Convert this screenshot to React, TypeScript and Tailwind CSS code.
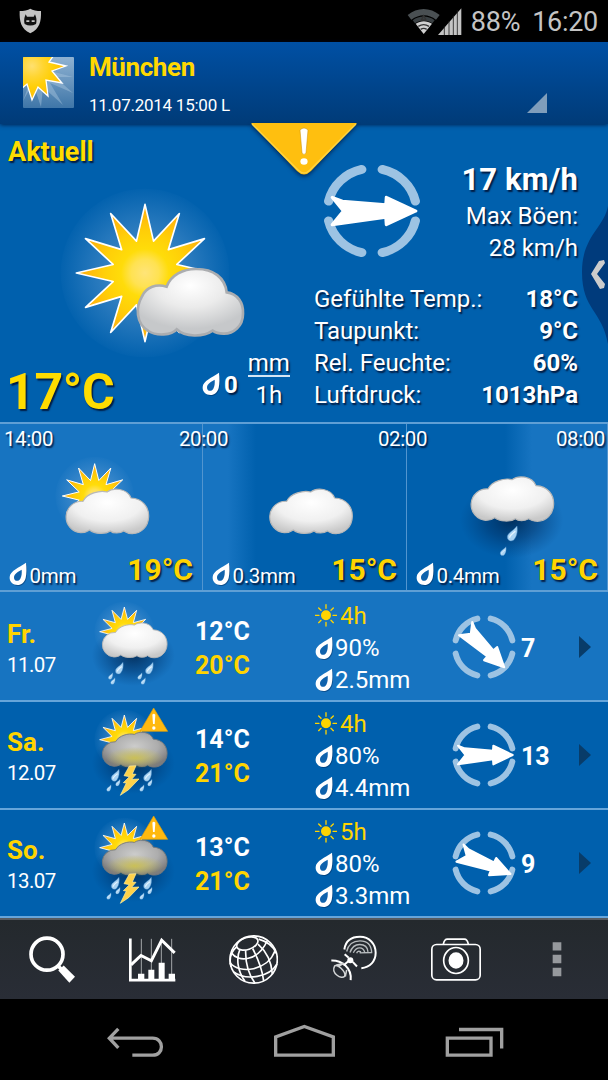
import type { ReactNode } from "react";

type Condition = "sunny" | "cloudy" | "shower" | "sunRain" | "storm";

interface Period {
  rain: string;
  temp: string;
  condition: Condition;
}

interface Day {
  name: string;
  date: string;
  condition: Condition;
  low: string;
  high: string;
  sun: string;
  humidity: string;
  rain: string;
  windAngle: number;
  wind: string;
}

const PERIODS: Period[] = [
  { rain: "0mm", temp: "19°C", condition: "sunny" },
  { rain: "0.3mm", temp: "15°C", condition: "cloudy" },
  { rain: "0.4mm", temp: "15°C", condition: "shower" },
];

const DAYS: Day[] = [
  { name: "Fr.", date: "11.07", condition: "sunRain", low: "12°C", high: "20°C", sun: "4h", humidity: "90%", rain: "2.5mm", windAngle: 45, wind: "7" },
  { name: "Sa.", date: "12.07", condition: "storm", low: "14°C", high: "21°C", sun: "4h", humidity: "80%", rain: "4.4mm", windAngle: 0, wind: "13" },
  { name: "So.", date: "13.07", condition: "storm", low: "13°C", high: "21°C", sun: "5h", humidity: "80%", rain: "3.3mm", windAngle: 22.5, wind: "9" },
];

const DETAILS = [
  { label: "Gefühlte Temp.:", value: "18°C" },
  { label: "Taupunkt:", value: "9°C" },
  { label: "Rel. Feuchte:", value: "60%" },
  { label: "Luftdruck:", value: "1013hPa" },
];

function starPoints(cx: number, cy: number, outer: number, inner: number) {
  return Array.from({ length: 24 }, (_, i) => {
    const r = i % 2 === 0 ? outer : inner;
    const a = (i * Math.PI) / 12;
    return `${(cx + r * Math.sin(a)).toFixed(1)},${(cy - r * Math.cos(a)).toFixed(1)}`;
  }).join(" ");
}

export default function App() {
  return (
    <main className="flex h-[1080px] w-[608px] flex-col overflow-hidden bg-black font-[Roboto,sans-serif] text-white">
      <Gradients />
      <StatusBar />
      <Header />
      <CurrentWeather />
      <PeriodStrip />
      {DAYS.map((day, i) => (
        <DayRow key={day.date} day={day} first={i === 0} />
      ))}
      <Toolbar />
      <NavBar />
    </main>
  );
}

function StatusBar() {
  return (
    <div className="flex h-[42px] shrink-0 items-center bg-black pr-[10px] pl-[19px] text-[#c4c4c4]">
      <svg width="23" height="26" viewBox="0 0 69 78">
        <path d="M34 2C27 7 14 9 2 9C1 40 6 63 34 76C62 63 67 40 66 9C54 9 41 7 34 2Z" fill="#c4c4c4" />
        <path d="M17 27L20 19L24 26H44L48 19L51 27C53 34 53 42 51 48C40 54 28 54 17 48C15 42 15 34 17 27Z" fill="#111" />
        <path d="M22 37H31V42H22ZM38 37H47V42H38Z" fill="#c4c4c4" />
      </svg>
      <svg className="ml-auto" width="56" height="28" viewBox="0 0 168 84">
        <path d="M2 24C30 0 70 0 98 24L87 38C65 20 37 20 13 38Z" fill="#4a5053" />
        <path d="M17 40C37 25 63 25 83 40L76 49C59 38 41 38 24 49Z" fill="#3a4043" />
        <path d="M26 50C41 40 60 40 75 50L50 81Z" fill="#d0d0d0" />
        <path d="M34 58Q50 48 66 58M41 67Q50 61 59 67M50 26L43 39H57Z" stroke="#333" strokeWidth="4" fill="none" />
        <path d="M93 84L163 4V84Z" fill="#c4c4c4" />
        <path d="M112 58V84M126 42V84M139 26V84M151 10V84" stroke="#222" strokeWidth="2.5" />
      </svg>
      <span className="ml-[8px] pt-[2px] text-[27px] leading-[40px] tracking-[-0.2px]">88%</span>
      <span className="ml-[12px] pt-[2px] text-[27px] leading-[40px] tracking-[-0.3px]">16:20</span>
    </div>
  );
}

function Header() {
  return (
    <header className="relative z-10 flex h-[82px] shrink-0 items-start bg-linear-to-b from-[#0050a4] to-[#003b78] pl-[23px] shadow-[0_1px_4px_rgba(0,20,60,0.8)]">
      <svg className="mt-[15px]" width="51" height="51" viewBox="0 0 51 51">
        <defs>
          <clipPath id="logoClip">
            <rect width="51" height="51" rx="1" />
          </clipPath>
          <linearGradient id="logoBg" x1="0" y1="0" x2="0" y2="1">
            <stop offset="0" stopColor="#8fb2d2" />
            <stop offset="1" stopColor="#3f76a8" />
          </linearGradient>
          <radialGradient id="logoSun" gradientUnits="userSpaceOnUse" cx="9" cy="9" r="38">
            <stop offset="0" stopColor="#ffe070" />
            <stop offset="0.3" stopColor="#ffd530" />
            <stop offset="0.55" stopColor="#ffcf08" />
            <stop offset="1" stopColor="#ffb50a" />
          </radialGradient>
        </defs>
        <g clipPath="url(#logoClip)">
          <rect width="51" height="51" fill="url(#logoBg)" />
          <path d="M12 10L50 20L32 20L50 36L27 26L40 48L20 30L18 50L10 26L0 44Z" fill="#a9c5de" opacity="0.45" />
          <path d="M-2 -2H31L26 5L43 9L29 14L39 26L23 23L25 39L15 30L9 43L4 27L-2 32Z" fill="url(#logoSun)" stroke="#fff" strokeWidth="1.3" />
        </g>
      </svg>
      <div className="ml-[15px] pt-[8px]">
        <h1 className="text-[26px] leading-[34px] font-bold tracking-[-0.4px] text-[#ffd800]">München</h1>
        <p className="mt-[11px] text-[17px] leading-[20px] tracking-[-0.25px]">11.07.2014 15:00 L</p>
      </div>
      <svg className="mt-[51px] mr-[61px] ml-auto" width="20" height="20" viewBox="0 0 20 20">
        <path d="M20 0V20H0Z" fill="#7f9dbb" />
      </svg>
      <svg className="absolute top-[81px] left-[248px] drop-shadow-[0_2px_2px_rgba(0,20,60,0.7)]" width="112" height="56" viewBox="0 0 112 56">
        <path d="M3 0H109L63 48Q56 55 49 48Z" fill="#ffbf0f" />
        <path d="M4 1L50 47Q56 53 62 47L108 1" fill="none" stroke="#ffd340" strokeWidth="1.5" />
        <path d="M52 7Q56 3 60 7L58 30Q56 33 54 30Z" fill="#fff" stroke="#c98a00" strokeWidth="0.5" />
        <ellipse cx="56" cy="38.5" rx="3.6" ry="3.2" fill="#fff" />
      </svg>
    </header>
  );
}

function CurrentWeather() {
  return (
    <section className="relative flex h-[298px] shrink-0 bg-[#0060ad] [text-shadow:1.5px_1.5px_1.5px_rgba(0,10,40,0.8)]">
      <div className="flex w-[314px] shrink-0 flex-col">
        <h2 className="pt-[12px] pl-[8px] text-[27px] leading-[32px] font-bold text-[#ffdc00]">Aktuell</h2>
        <svg className="mt-[19px] ml-[60px] shrink-0 overflow-visible" width="188" height="172" viewBox="180 200 564 516">
          <circle cx="435" cy="458" r="253" fill="url(#glow)" />
          <polygon points={starPoints(435, 458, 206, 99)} fill="url(#sunFill)" stroke="#fff" strokeWidth="5" strokeLinejoin="round" />
          <path
            d="M530 627C515 645 470 648 445 632C407 610 407 560 426 528C439 499 470 490 500 499C512 465 550 445 590 446C640 446 675 472 680 516C712 520 731 547 729 580C729 618 700 641 670 640C655 640 645 636 638 631C610 651 555 651 530 627Z"
            fill="url(#bigCloud)"
            stroke="#abadb0"
            strokeWidth="8"
          />
        </svg>
        <div className="-mt-[12px] flex items-center">
          <span className="w-[202px] pt-[16px] pl-[6px] text-[50px] leading-[58px] font-bold tracking-[-0.3px] text-[#ffdc00]">17°C</span>
          <span className="-mt-px">
            <DropIcon />
          </span>
          <span className="ml-[4px] pt-px text-[24px] font-bold">0</span>
          <span className="mt-[-7px] ml-[10px] flex w-[42px] flex-col items-center text-[24px] leading-[31px]">
            <span className="h-[26px] border-b-2 border-[#d5e5f4] leading-[24px]">mm</span>
            <span className="pt-[3px]">1h</span>
          </span>
        </div>
      </div>
      <div className="w-[264px] shrink-0 pt-[40px]">
        <div className="flex justify-between">
          <div className="pl-[9px]">
            <Compass angle={0} width={98} height={94} />
          </div>
          <div className="text-right text-[24px] leading-[32px]">
            <p className="text-[31px] font-bold tracking-[0.15px]">17 km/h</p>
            <p className="pt-[4px]">Max Böen:</p>
            <p>28 km/h</p>
          </div>
        </div>
        <dl className="mt-[19px]">
          {DETAILS.map((d) => (
            <div key={d.label} className="flex justify-between text-[24px] leading-[32px]">
              <dt>{d.label}</dt>
              <dd className="font-bold">{d.value}</dd>
            </div>
          ))}
        </dl>
      </div>
      <svg className="absolute top-[74px] right-0" width="28" height="150" viewBox="0 0 28 150">
        <path d="M28 8C24 30 2 38 2 74C2 112 22 112 28 146Z" fill="#003b7c" />
        <path d="M19 63L24 62L25 65L17 76L25 86L24 90L20 91L11 76Z" fill="#ccc" />
      </svg>
    </section>
  );
}

function PeriodStrip() {
  return (
    <section className="relative grid h-[170px] shrink-0 grid-cols-[203px_204px_201px] border-y-2 border-[#5f9fd5] bg-[linear-gradient(to_right,#1774c1_228px,#0060ad_256px,#0060ad_505px,#1774c1_532px)] [text-shadow:1.5px_1.5px_1.5px_rgba(0,10,40,0.8)]">
      {PERIODS.map((p, i) => (
        <div key={i} className="flex flex-col justify-between border-r border-[#5295cf] pt-[36px] pr-[9px] pb-[4px] pl-[9px] last:border-r-0 last:pr-[7px]">
          <svg className="ml-[44px] overflow-visible" width="110" height="100" viewBox="0 0 330 300">
            <PeriodArt condition={p.condition} />
          </svg>
          <div className="-mt-[12px] flex items-end">
            <DropIcon />
            <span className="ml-[2.5px] text-[20.5px] leading-[20px] tracking-[-0.3px]">{p.rain}</span>
            <span className="ml-auto pb-px text-[30px] leading-[31px] font-bold text-[#ffd400]">{p.temp}</span>
          </div>
        </div>
      ))}
      <div className="absolute inset-x-0 top-0 flex pr-[3px] pl-[4px] text-[20.5px] leading-[30px] tracking-[-0.4px]">
        <span className="w-[175px]">14:00</span>
        <span className="w-[199px]">20:00</span>
        <span>02:00</span>
        <span className="ml-auto">08:00</span>
      </div>
    </section>
  );
}

function PeriodArt({ condition }: { condition: Condition }) {
  if (condition === "sunny") {
    return (
      <>
        <circle cx="125" cy="108" r="118" fill="url(#glow)" />
        <polygon points={starPoints(125, 108, 97, 48)} fill="url(#sunFill)" stroke="#fff" strokeWidth="3" />
        <Cloud x={38} y={88} />
      </>
    );
  }
  if (condition === "cloudy") {
    return <Cloud x={40} y={88} />;
  }
  return (
    <>
      <ellipse cx="155" cy="180" rx="155" ry="115" fill="url(#shade)" />
      <Cloud x={32} y={51} />
      <RainDrop x={171} y={198} size={1} />
      <RainDrop x={138} y={260} size={0.6} />
    </>
  );
}

function DayRow({ day, first }: { day: Day; first: boolean }) {
  return (
    <section
      className={
        first
          ? "flex h-[110px] shrink-0 items-center border-b-2 border-[#66a5da] bg-[#1774c1] pt-[2px]"
          : "flex h-[108px] shrink-0 items-center border-b-2 border-[#66a5da] bg-[#0060ad]"
      }
    >
      <div className="w-[90px] shrink-0 pt-[6px] pl-[7px]">
        <p className="text-[26px] leading-[30px] font-bold text-[#ffd400]">{day.name}</p>
        <p className="text-[20.5px] leading-[32px] tracking-[-0.55px]">{day.date}</p>
      </div>
      <svg className="mt-[-6px] shrink-0 overflow-visible" width="84" height="84" viewBox="0 0 252 252">
        <DayArt storm={day.condition === "storm"} />
      </svg>
      <div className="w-[141px] shrink-0 pt-[4px] pl-[21px] text-[25px] leading-[34px] font-bold">
        <p>{day.low}</p>
        <p className="text-[#ffd400]">{day.high}</p>
      </div>
      <div className="w-[137px] shrink-0 pt-[2px] text-[24px] leading-[32px]">
        <p className="flex items-center text-[#ffd400]">
          <SunMark />
          <span className="ml-[3px]">{day.sun}</span>
        </p>
        <Metric>{day.humidity}</Metric>
        <Metric>{day.rain}</Metric>
      </div>
      <Compass angle={day.windAngle} width={64} height={64} />
      <span className="ml-[5px] pt-[3px] text-[25px] font-bold">{day.wind}</span>
      <svg className="mr-[17px] ml-auto" width="12" height="22" viewBox="0 0 12 22">
        <path d="M0 0L12 11L0 22Z" fill="#083c69" />
      </svg>
    </section>
  );
}

function DayArt({ storm }: { storm: boolean }) {
  return (
    <>
      <circle cx="103" cy="89" r="90" fill="url(#glow)" />
      <ellipse cx="130" cy="160" rx="125" ry="92" fill="url(#shade)" />
      <polygon points={starPoints(103, 89, 74, 38)} fill="url(#sunFill)" stroke="#fff" strokeWidth="2.5" />
      <Cloud x={36} y={storm ? 67 : 63} scale={0.784} dark={storm} />
      {storm ? (
        <>
          <RainDrop x={87} y={178} size={0.8} />
          <RainDrop x={184} y={178} size={0.8} />
          <RainDrop x={90} y={208} size={0.45} />
          <RainDrop x={63} y={224} size={0.45} />
          <RainDrop x={186} y={208} size={0.45} />
          <RainDrop x={162} y={224} size={0.45} />
          <polygon
            points="118,168 138,167 127,192 138,193 125,208 147,207 116,239 91,256 109,219 100,218 118,200 102,197"
            fill="#ffd24a"
            stroke="#fff0a0"
            strokeWidth="2"
          />
          <path d="M191 -6L233 64H150Z" fill="#ffb90f" stroke="#e3a007" strokeWidth="2" strokeLinejoin="round" />
          <path d="M187 14Q191 8 196 14L194 42H189Z" fill="#fff" />
          <circle cx="191.5" cy="54" r="5" fill="#fff" />
        </>
      ) : (
        <>
          <RainDrop x={99} y={181} size={0.78} />
          <RainDrop x={189} y={181} size={0.78} />
          <RainDrop x={68} y={212} size={0.45} />
          <RainDrop x={75} y={227} size={0.45} />
          <RainDrop x={156} y={212} size={0.45} />
          <RainDrop x={166} y={227} size={0.45} />
        </>
      )}
    </>
  );
}

function Metric({ children }: { children: ReactNode }) {
  return (
    <p className="flex items-center">
      <DropIcon />
      <span className="ml-[2px]">{children}</span>
    </p>
  );
}

function Cloud({ x, y, scale = 1, dark = false }: { x: number; y: number; scale?: number; dark?: boolean }) {
  return (
    <g transform={`translate(${x} ${y}) scale(${scale})`}>
      <path
        d="M45 130A47 47 0 1 1 52 36C64 12 102 2 124 8C142 -6 184 -4 196 26C232 28 250 54 249 82C248 112 226 133 200 133C187 133 180 129 174 125C164 133 142 133 134 125C120 135 87 135 72 122C64 128 54 130 45 130Z"
        fill={dark ? "url(#darkCloud)" : "url(#cloudFill)"}
        stroke={dark ? "#77797b" : "#b8b8b8"}
        strokeWidth="3.5"
      />
      {dark && <ellipse cx="125" cy="98" rx="110" ry="42" fill="url(#cloudFlash)" />}
    </g>
  );
}

function RainDrop({ x, y, size }: { x: number; y: number; size: number }) {
  return (
    <g transform={`translate(${x} ${y}) scale(${size})`}>
      <path d="M0 0C2 14 1 28 -8 40C-14 48 -30 46 -29 32C-28 20 -10 14 0 0Z" fill="#a9d3f3" stroke="#4a8cc6" strokeWidth="1.5" />
      <path d="M-5 16C-12 22 -22 28 -22 35" fill="none" stroke="#e6f4ff" strokeWidth="4" />
    </g>
  );
}

function DropIcon() {
  return (
    <svg className="shrink-0 overflow-visible" width="18" height="24" viewBox="0 0 54 72">
      <path d="M53 5C55 22 55 38 52 51C48 65 38 72 28 72C14 72 5 62 6 49Z" fill="#00244f" opacity="0.45" />
      <path d="M51 2C53 18 53 34 50 48C46 62 37 69 26 69C11 69 1 59 2 45C3 26 30 17 51 2Z" fill="#fff" />
      <path d="M38 23C28 29 15 35 15 47C15 58 28 60 34 50C38 42 39 34 38 23Z" fill="#0f62ac" />
    </svg>
  );
}

function SunMark() {
  return (
    <svg width="22" height="24" viewBox="0 -3 66 72" stroke="#ffd400" strokeWidth="4" strokeLinecap="round">
      <circle cx="33" cy="31" r="13" fill="#ffd400" />
      <path d="M33 -1V10M33 52V63M1 31H12M54 31H65M11 9L18 16M48 46L55 53M11 53L18 46M48 16L55 9" />
    </svg>
  );
}

function Compass({ angle, width, height }: { angle: number; width: number; height: number }) {
  return (
    <svg className="shrink-0" width={width} height={height} viewBox="-96 -96 192 192" preserveAspectRatio="none">
      <path
        d="M-20 -85A87 87 0 0 0 -85 -20M20 -85A87 87 0 0 1 85 -20M-20 85A87 87 0 0 1 -85 20M20 85A87 87 0 0 0 85 20"
        fill="none"
        stroke="#9dc3e3"
        strokeWidth="18"
        strokeLinecap="round"
      />
      <path
        transform={`rotate(${angle})`}
        d="M86 0L28 28L27 13L-78 28L-56 0L-78 -28L-58 -20L27 -13L28 -28Z"
        fill="#fff"
        stroke="#fff"
        strokeWidth="6"
        strokeLinejoin="round"
      />
    </svg>
  );
}

function Toolbar() {
  return (
    <nav className="grid h-[81px] shrink-0 grid-cols-6 place-items-center border-t-2 border-[#565b60] bg-linear-to-b from-[#24292d] to-[#292d36]">
      <svg width="50" height="50" viewBox="77 58.5 150 150">
        <circle cx="140" cy="116" r="48" fill="none" stroke="#fff" strokeWidth="11" />
        <path d="M172 150L184 162" stroke="#fff" strokeWidth="11" />
        <path d="M174 165L190 150L224 184L207 202Z" fill="#fff" />
      </svg>
      <svg width="50" height="50" viewBox="381 58.5 150 150">
        <path d="M424 70V195M454 70V195M484 70V195M515 70V195" stroke="#a3a6a9" strokeWidth="3" />
        <path d="M391 69V194H526" fill="none" stroke="#fff" strokeWidth="8" />
        <path d="M393 148L423 120L454 136L485 74L524 112" fill="none" stroke="#fff" strokeWidth="9" />
        <path d="M414 175H433V195H414ZM445 163H463V195H445ZM476 142H494V195H476ZM506 175H525V195H506Z" fill="#fff" />
      </svg>
      <svg width="50" height="50" viewBox="685 58.5 150 150" fill="none" stroke="#fff" strokeWidth="5">
        <circle cx="762" cy="132" r="71" />
        <ellipse cx="743" cy="84" rx="33" ry="18" transform="rotate(-18 743 84)" />
        <path d="M695 112C715 142 775 138 803 75M691 142C720 178 805 165 826 106M702 169C740 197 810 185 832 145" />
        <path d="M712 93C691 110 688 130 694 154M721 101C708 130 715 170 736 197M738 104C737 140 748 178 766 203M759 99C775 130 788 165 792 196M775 86C800 108 815 135 818 175M777 71C808 80 824 97 830 114" />
      </svg>
      <svg width="50" height="50" viewBox="77 58.5 150 150" fill="none" stroke="#fff">
        <path d="M120 102C124 75 142 64 167 64C195 64 214 85 214 112C214 137 197 156 171 158" strokeWidth="6" />
        <path d="M127 108C132 86 147 76 167 76C190 76 201 91 202 111L166 112M137 111C143 93 151 87 166 87C181 87 190 96 191 109M147 112C152 101 158 97 166 97C175 97 179 102 181 110M157 113C159 107 163 106 170 109" stroke="#b8bcbe" strokeWidth="4" />
        <path d="M81 135C112 134 143 157 139 194" strokeWidth="6" />
        <path d="M121 116L133 127M145 139L158 153M118 149L132 137" strokeWidth="6" />
        <circle cx="138" cy="134" r="9" fill="#fff" stroke="none" />
        <path d="M91 151C99 145 126 168 121 182C112 193 79 174 91 151ZM94 149L116 144M123 183L127 163M101 153L120 143" stroke="#d3d5d6" strokeWidth="4.5" />
      </svg>
      <svg width="50" height="50" viewBox="381 58.5 150 150" fill="none" stroke="#fff" strokeWidth="5">
        <rect x="383.5" y="87" width="145" height="106" rx="14" />
        <path d="M418 86Q421 71 430 71H481Q490 71 493 86" />
        <ellipse cx="456" cy="135" rx="37" ry="39" />
        <ellipse cx="456" cy="135" rx="20" ry="22" fill="#fff" />
      </svg>
      <svg width="50" height="50" viewBox="685 58.5 150 150" fill="#96999d">
        <path d="M747 80H773V105H747ZM747 118H773V143H747ZM747 157H773V182H747Z" />
      </svg>
    </nav>
  );
}

function NavBar() {
  return (
    <nav className="flex h-[81px] shrink-0 items-center justify-between bg-black pr-[103px] pl-[106px]">
      <svg width="58" height="36" viewBox="318 319.5 174 108" fill="none" stroke="#a0a0a0" strokeWidth="10">
        <path d="M328 368H458C493 368 493 419 458 419H397M355 340L328 368L355 397" />
      </svg>
      <svg width="64" height="36" viewBox="817 319.5 192 108" fill="none" stroke="#a0a0a0" strokeWidth="10">
        <path d="M825 419V364L911 333L998 364V419Z" />
      </svg>
      <svg width="60" height="36" viewBox="424 319.5 180 108" fill="none" stroke="#a0a0a0" strokeWidth="10">
        <path d="M431 368H562V419H431ZM466 342H594V399" />
      </svg>
    </nav>
  );
}

// Shared paint servers for all the weather symbols
function Gradients() {
  return (
    <svg className="absolute" width="0" height="0" aria-hidden="true">
      <defs>
        <radialGradient id="sunFill">
          <stop offset="0" stopColor="#ffe478" />
          <stop offset="0.2" stopColor="#ffe252" />
          <stop offset="0.35" stopColor="#ffdc0a" />
          <stop offset="0.6" stopColor="#ffcf08" />
          <stop offset="1" stopColor="#ffab10" />
        </radialGradient>
        <radialGradient id="glow">
          <stop offset="0" stopColor="#9cc4e8" stopOpacity="0.6" />
          <stop offset="0.6" stopColor="#6ba3d8" stopOpacity="0.35" />
          <stop offset="1" stopColor="#6ba3d8" stopOpacity="0.03" />
        </radialGradient>
        <radialGradient id="shade">
          <stop offset="0" stopColor="#00264f" stopOpacity="0.85" />
          <stop offset="0.5" stopColor="#003064" stopOpacity="0.5" />
          <stop offset="1" stopColor="#003c78" stopOpacity="0" />
        </radialGradient>
        <radialGradient id="bigCloud" cx="0.5" cy="0.25" r="0.65">
          <stop offset="0" stopColor="#ffffff" />
          <stop offset="0.5" stopColor="#ebebeb" />
          <stop offset="1" stopColor="#c6c8ca" />
        </radialGradient>
        <radialGradient id="cloudFill" cx="0.5" cy="0.3" r="0.7">
          <stop offset="0" stopColor="#ffffff" />
          <stop offset="0.6" stopColor="#f0f0f0" />
          <stop offset="1" stopColor="#c9c9c9" />
        </radialGradient>
        <radialGradient id="darkCloud" cx="0.5" cy="0.4" r="0.6">
          <stop offset="0" stopColor="#cccccb" />
          <stop offset="0.6" stopColor="#adadad" />
          <stop offset="1" stopColor="#7c7c7e" />
        </radialGradient>
        <radialGradient id="cloudFlash">
          <stop offset="0" stopColor="#d3c53a" stopOpacity="0.75" />
          <stop offset="1" stopColor="#d3c53a" stopOpacity="0" />
        </radialGradient>
      </defs>
    </svg>
  );
}
